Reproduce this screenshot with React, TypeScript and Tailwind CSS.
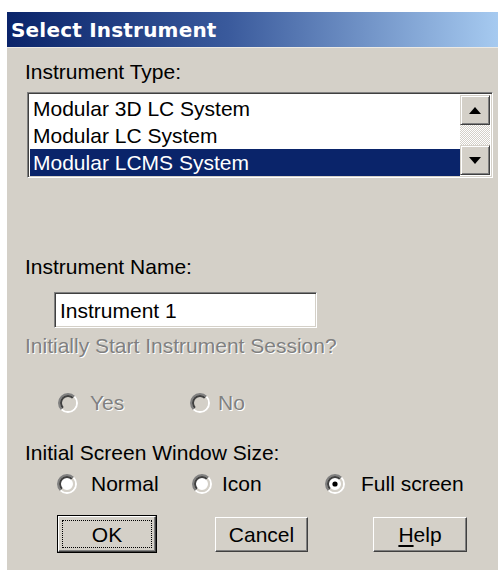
import React from "react";

const FACE = "#d4d0c8";

function Radio({ checked = false, disabled = false }: { checked?: boolean; disabled?: boolean }) {
  // classic sunken radio ring: dark arcs on top-left, light arcs on bottom-right
  const c = 10;
  const arc = (r: number, topLeft: boolean) => {
    const d = r * Math.SQRT1_2;
    const bl = `${c - d} ${c + d}`;
    const tr = `${c + d} ${c - d}`;
    return topLeft ? `M ${bl} A ${r} ${r} 0 0 1 ${tr}` : `M ${tr} A ${r} ${r} 0 0 1 ${bl}`;
  };
  return (
    <svg width="20" height="20" viewBox="0 0 20 20" className="shrink-0">
      <circle cx={c} cy={c} r={7} fill={disabled ? FACE : "#ffffff"} />
      <path d={arc(9, true)} stroke="#808080" strokeWidth="2" fill="none" />
      <path d={arc(9, false)} stroke="#ffffff" strokeWidth="2" fill="none" />
      <path d={arc(7, true)} stroke="#404040" strokeWidth="2" fill="none" />
      <path d={arc(7, false)} stroke={FACE} strokeWidth="2" fill="none" />
      {checked && <circle cx={c} cy={c} r={2.6} fill="#000000" />}
    </svg>
  );
}

function ScrollButton({ dir }: { dir: "up" | "down" }) {
  return (
    <div className="w-[30px] h-[30px] bg-[#d4d0c8] border border-t-[#d4d0c8] border-l-[#d4d0c8] border-r-[#404040] border-b-[#404040] shadow-[inset_1px_1px_0_#ffffff,inset_-1px_-1px_0_#808080] flex items-center justify-center">
      <svg width="12" height="7" viewBox="0 0 12 7">
        {dir === "up" ? <path d="M6 0 L12 7 L0 7 Z" fill="#000" /> : <path d="M0 0 L12 0 L6 7 Z" fill="#000" />}
      </svg>
    </div>
  );
}

function Button({
  children,
  width,
  isDefault = false,
}: {
  children: React.ReactNode;
  width: string;
  isDefault?: boolean;
}) {
  if (isDefault) {
    return (
      <div className={`${width} h-[38px] border border-black flex`}>
        <div className="flex-1 border border-t-white border-l-white border-r-[#404040] border-b-[#404040] shadow-[inset_-1px_-1px_0_#808080] p-[3px] flex">
          <div className="flex-1 border border-dotted border-black flex items-center justify-center text-[21px] leading-none">
            {children}
          </div>
        </div>
      </div>
    );
  }
  return (
    <div
      className={`${width} h-[35px] mt-[2px] border border-t-white border-l-white border-r-[#404040] border-b-[#404040] shadow-[inset_-1px_-1px_0_#808080] flex items-center justify-center text-[21px] leading-none`}
    >
      {children}
    </div>
  );
}

const items = ["Modular 3D LC System", "Modular LC System", "Modular LCMS System"];

export default function App() {
  return (
    <div className="w-[498px] h-[570px] bg-white pt-[12px] pl-[7px] font-['Liberation_Sans',Arial,sans-serif] text-black">
      <div className="h-[558px] bg-[#d4d0c8] flex flex-col">
        {/* caption */}
        <div className="h-[35px] [background-image:linear-gradient(90deg,#0a246a_0%,#3a5a9c_45%,#a6caf0_100%)] flex items-center pl-[4px]">
          <span className="font-['DejaVu_Sans',Verdana,sans-serif] font-bold text-[20px] text-white leading-none tracking-[0.2px]">
            Select Instrument
          </span>
        </div>
        <div className="h-px bg-[#ebe9e4]" />

        <div className="text-[21px] leading-[24px] ml-[18px] mt-[12px]">Instrument Type:</div>

        {/* list box */}
        <div className="ml-[20px] mr-[5px] mt-[8px] h-[86px] border border-t-[#808080] border-l-[#808080] border-r-white border-b-white shadow-[inset_1px_1px_0_#404040,inset_-1px_-1px_0_#d4d0c8] p-[2px] flex bg-white">
          <div className="flex-1 flex flex-col">
            {items.map((it, i) => (
              <div
                key={it}
                className={`h-[27px] pl-[3px] text-[21px] leading-[27px] whitespace-nowrap ${
                  i === 2 ? "bg-[#0a246a] text-white" : "text-black"
                }`}
              >
                {it}
              </div>
            ))}
          </div>
          <div className="w-[30px] flex flex-col">
            <ScrollButton dir="up" />
            <div className="flex-1 [background-image:repeating-conic-gradient(#ffffff_0%_25%,#d4d0c8_0%_50%)] [background-size:2px_2px]" />
            <ScrollButton dir="down" />
          </div>
        </div>

        <div className="text-[21px] leading-[24px] ml-[18px] mt-[77px]">Instrument Name:</div>

        <div className="ml-[47px] mt-[13px] w-[263px] h-[36px] border border-t-[#808080] border-l-[#808080] border-r-white border-b-white shadow-[inset_1px_1px_0_#404040,inset_-1px_-1px_0_#d4d0c8] bg-white flex items-center pl-[5px] text-[21px] leading-none">
          Instrument 1
        </div>

        <div className="text-[21px] leading-[24px] ml-[18px] mt-[6px] text-[#808080] [text-shadow:1px_1px_0_#ffffff]">
          Initially Start Instrument Session?
        </div>

        <div className="flex items-center h-[24px] ml-[51px] mt-[33px] text-[21px] text-[#808080] [text-shadow:1px_1px_0_#ffffff]">
          <div className="w-[132px] flex items-center gap-[12px]">
            <Radio disabled />
            <span>Yes</span>
          </div>
          <div className="flex items-center gap-[8px]">
            <Radio disabled />
            <span>No</span>
          </div>
        </div>

        <div className="text-[21px] leading-[24px] ml-[18px] mt-[26px]">Initial Screen Window Size:</div>

        <div className="flex items-center h-[24px] ml-[50px] mt-[7px] text-[21px]">
          <div className="w-[135px] flex items-center gap-[14px]">
            <Radio />
            <span>Normal</span>
          </div>
          <div className="w-[133px] flex items-center gap-[10px]">
            <Radio />
            <span>Icon</span>
          </div>
          <div className="flex items-center gap-[16px]">
            <Radio checked />
            <span>Full screen</span>
          </div>
        </div>

        <div className="flex items-start ml-[50px] mt-[19px]">
          <Button width="w-[100px]" isDefault>
            OK
          </Button>
          <div className="w-[58px]" />
          <Button width="w-[93px]">Cancel</Button>
          <div className="w-[65px]" />
          <Button width="w-[94px]">
            <span>
              <span className="underline underline-offset-[3px]">H</span>elp
            </span>
          </Button>
        </div>
      </div>
    </div>
  );
}
